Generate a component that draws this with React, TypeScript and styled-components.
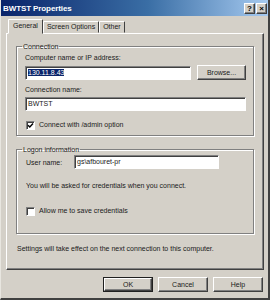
import React, { useState } from 'react';
import styled, { createGlobalStyle, css } from 'styled-components';

const GlobalStyle = createGlobalStyle`
  html, body {
    margin: 0;
    padding: 0;
    background: #d4d0c8;
  }
  body {
    font-family: "Liberation Sans", Arial, sans-serif;
    font-size: 7px;
    color: #1a1a1a;
  }
`;

const raised = css`
  border-style: solid;
  border-width: 1px;
  border-color: #ffffff #404040 #404040 #ffffff;
  box-shadow: inset -1px -1px 0 #808080;
`;

const sunken = css`
  border-style: solid;
  border-width: 1px;
  border-color: #808080 #ffffff #ffffff #808080;
  box-shadow: inset 1px 1px 0 #404040;
`;

const Window = styled.div`
  width: 270px;
  height: 300px;
  box-sizing: border-box;
  background: #d4d0c8;
  border-right: 2px solid #404040;
  border-bottom: 2px solid #404040;
  border-left: 1px solid #e8e6e0;
  display: flex;
  flex-direction: column;
`;

const TitleBar = styled.div`
  height: 16px;
  flex: none;
  display: flex;
  align-items: center;
  justify-content: space-between;
  padding: 0 1px 0 2px;
  background: linear-gradient(90deg, #0a246a 0%, #3a6ea5 55%, #a6caf0 100%);
`;

const Title = styled.span`
  color: #ffffff;
  font-weight: bold;
  font-size: 8px;
  letter-spacing: -0.1px;
`;

const TitleButtons = styled.div`
  display: flex;
  gap: 1px;
`;

const TitleButton = styled.span`
  ${raised};
  width: 9px;
  height: 9px;
  background: #d4d0c8;
  color: #000;
  font-weight: bold;
  font-size: 8px;
  line-height: 9px;
  text-align: center;
`;

const Body = styled.div`
  flex: 1;
  display: flex;
  flex-direction: column;
  padding: 3px 0 0 5px;
`;

const TabRow = styled.div`
  display: flex;
  align-items: flex-end;
  height: 14px;
  padding-left: 2px;
  position: relative;
  z-index: 1;
`;

const Tab = styled.div<{ $active?: boolean }>`
  box-sizing: border-box;
  border: 1px solid;
  border-color: #ffffff #404040 transparent #ffffff;
  border-radius: 1px 1px 0 0;
  background: #d4d0c8;
  padding: 0 3px;
  height: ${(p) => (p.$active ? '15px' : '12px')};
  line-height: ${(p) => (p.$active ? '12px' : '10px')};
  margin-bottom: ${(p) => (p.$active ? '-1px' : '0')};
  ${(p) =>
    p.$active &&
    css`
      padding: 0 4px;
    `}
`;

const Panel = styled.div`
  box-sizing: border-box;
  width: 258px;
  height: 237px;
  border: 1px solid;
  border-color: #ffffff #404040 #404040 #ffffff;
  box-shadow: inset -1px -1px 0 #808080;
  padding: 8px 9px 0 9px;
  display: flex;
  flex-direction: column;
`;

const Group = styled.fieldset<{ $gap?: number; $pad?: number }>`
  margin: ${(p) => p.$gap ?? 0}px 0 0 0;
  padding: 0 7px ${(p) => p.$pad ?? 5}px 8px;
  border: 1px solid #808080;
  box-shadow: inset 1px 1px 0 #ffffff, 1px 1px 0 #ffffff;
  display: flex;
  flex-direction: column;
  min-width: 0;
`;

const Legend = styled.legend`
  padding: 0 1px;
  margin-left: -3px;
  line-height: 9px;
`;

const Label = styled.div<{ $top?: number }>`
  line-height: 9px;
  margin-top: ${(p) => p.$top ?? 0}px;
`;

const Row = styled.div<{ $top?: number }>`
  display: flex;
  align-items: center;
  gap: 6px;
  margin-top: ${(p) => p.$top ?? 0}px;
`;

const TextBox = styled.div<{ $width?: number }>`
  ${sunken};
  box-sizing: border-box;
  height: 14px;
  background: #ffffff;
  padding: 0 2px;
  line-height: 12px;
  flex: ${(p) => (p.$width ? 'none' : '1')};
  width: ${(p) => (p.$width ? `${p.$width}px` : 'auto')};
  white-space: nowrap;
  overflow: hidden;
`;

const Selected = styled.span`
  background: #0a246a;
  color: #ffffff;
`;

const Button = styled.button<{ $default?: boolean }>`
  ${raised};
  box-sizing: border-box;
  font: inherit;
  color: #1a1a1a;
  background: #d4d0c8;
  width: 50px;
  height: 15px;
  padding: 0;
  ${(p) =>
    p.$default &&
    css`
      outline: 1px solid #202020;
      outline-offset: -1px;
      border-width: 2px;
      border-color: #ffffff #404040 #404040 #ffffff;
    `}
`;

const Check = styled.span<{ $checked?: boolean }>`
  ${sunken};
  box-sizing: border-box;
  width: 9px;
  height: 9px;
  background: #ffffff;
  display: inline-flex;
  align-items: center;
  justify-content: center;
  flex: none;
`;

const CheckRow = styled.label<{ $top?: number }>`
  display: flex;
  align-items: center;
  gap: 4px;
  margin-top: ${(p) => p.$top ?? 0}px;
  margin-left: 1px;
  line-height: 10px;
`;

const UserLabel = styled.span`
  width: 42px;
  margin-left: 1px;
`;

const Note = styled.div<{ $top?: number }>`
  line-height: 9px;
  margin-top: ${(p) => p.$top ?? 0}px;
  margin-left: 1px;
`;

const Footer = styled.div`
  display: flex;
  justify-content: flex-end;
  gap: 5px;
  padding: 7px 5px 0 0;
`;

function CheckBox({ checked, label, top }: { checked: boolean; label: string; top: number }) {
  return (
    <CheckRow $top={top}>
      <Check $checked={checked}>
        {checked && (
          <svg width="7" height="7" viewBox="0 0 7 7">
            <path d="M1 3.2 L2.8 5 L6 1.5" stroke="#000" strokeWidth="1.4" fill="none" />
          </svg>
        )}
      </Check>
      {label}
    </CheckRow>
  );
}

export default function App() {
  const [tab] = useState('General');
  const tabs = ['General', 'Screen Options', 'Other'];

  return (
    <>
      <GlobalStyle />
      <Window>
        <TitleBar>
          <Title>BWTST Properties</Title>
          <TitleButtons>
            <TitleButton>?</TitleButton>
            <TitleButton>×</TitleButton>
          </TitleButtons>
        </TitleBar>
        <Body>
          <TabRow>
            {tabs.map((t) => (
              <Tab key={t} $active={t === tab}>
                {t}
              </Tab>
            ))}
          </TabRow>
          <Panel>
            <Group $pad={5}>
              <Legend>Connection</Legend>
              <Label $top={2}>Computer name or IP address:</Label>
              <Row $top={3}>
                <TextBox $width={166}>
                  <Selected>130.11.8.43</Selected>
                </TextBox>
                <Button>Browse...</Button>
              </Row>
              <Label $top={5}>Connection name:</Label>
              <Row $top={3}>
                <TextBox>BWTST</TextBox>
              </Row>
              <CheckBox checked label="Connect with /admin option" top={9} />
            </Group>
            <Group $gap={9} $pad={17}>
              <Legend>Logon information</Legend>
              <Row $top={1}>
                <UserLabel>User name:</UserLabel>
                <TextBox $width={145}>gs\afbouret-pr</TextBox>
              </Row>
              <Note $top={12}>You will be asked for credentials when you connect.</Note>
              <CheckBox checked={false} label="Allow me to save credentials" top={16} />
            </Group>
            <Note $top={10}>Settings will take effect on the next connection to this computer.</Note>
          </Panel>
          <Footer>
            <Button $default>OK</Button>
            <Button>Cancel</Button>
            <Button>Help</Button>
          </Footer>
        </Body>
      </Window>
    </>
  );
}
